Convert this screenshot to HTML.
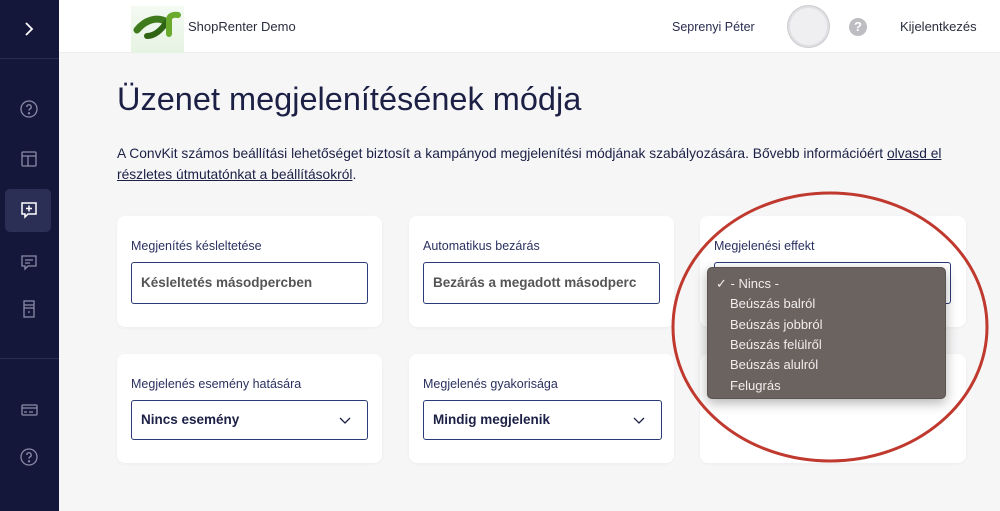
<!DOCTYPE html>
<html><head><meta charset="utf-8"><style>
*{margin:0;padding:0;box-sizing:border-box}
body{width:1000px;height:511px;overflow:hidden;background:#f6f6f7;font-family:"Liberation Sans",sans-serif;color:#1c2045;position:relative}
.side{position:absolute;left:0;top:0;width:59px;height:511px;background:#14163a}
.side .sep{position:absolute;left:0;width:59px;height:1px;background:#2a2d50}
.ic{position:absolute;left:19px}
.hdr{position:absolute;left:59px;top:0;width:941px;height:53px;background:#fff;border-bottom:1px solid #ececef}
.card{position:absolute;background:#fff;border-radius:8px;box-shadow:0 1px 3px rgba(0,0,0,.04)}
.lbl{position:absolute;left:14px;font-size:12.5px;color:#2b3160}
.inp{position:absolute;left:14px;width:237px;height:42px;border:1px solid #2b3a78;border-radius:3px;font-size:13.5px;font-weight:bold;padding-left:9px;line-height:40px}
.dd{position:absolute;left:707px;top:267px;width:239px;height:132px;background:#6b6360;border-radius:5px;border:1px solid #5a5350;box-shadow:0 4px 12px rgba(0,0,0,.3);color:#f2eeee;font-size:13px}
.dd div{position:absolute;left:22px}
</style></head><body>
<div class="side">
<svg class="ic" style="left:22px;top:20px" width="14" height="18" viewBox="0 0 14 18"><path d="M4 3l6 6-6 6" fill="none" stroke="#fff" stroke-width="1.8"/></svg>
<div class="sep" style="top:58px"></div>
<svg class="ic" style="top:99px" width="20" height="20" viewBox="0 0 20 20" fill="none" stroke="#8a8ca8" stroke-width="1.3"><circle cx="10" cy="10" r="8"/><path d="M7.8 8a2.2 2.2 0 1 1 3 2c-.7.4-.8.8-.8 1.6"/><circle cx="10" cy="14.3" r=".5" fill="#8a8ca8"/></svg>
<svg class="ic" style="top:149px" width="20" height="20" viewBox="0 0 20 20" fill="none" stroke="#8a8ca8" stroke-width="1.3"><rect x="3" y="3" width="14" height="14" rx="1"/><path d="M3 7h14M9 7v10"/></svg>
<div style="position:absolute;left:5px;top:189px;width:46px;height:43px;background:#2c2f55;border-radius:5px"></div>
<svg class="ic" style="top:200px" width="20" height="20" viewBox="0 0 20 20" fill="none" stroke="#fff" stroke-width="1.5"><path d="M3 3h14v11H9l-3 3v-3H3z"/><path d="M10 5.5v6M7 8.5h6"/></svg>
<svg class="ic" style="top:252px" width="20" height="20" viewBox="0 0 20 20" fill="none" stroke="#8a8ca8" stroke-width="1.3"><path d="M3 4h14v10H9l-3 3v-3H3z"/><path d="M6 8h8M6 11h5"/></svg>
<svg class="ic" style="top:299px" width="20" height="20" viewBox="0 0 20 20" fill="none" stroke="#8a8ca8" stroke-width="1.3"><rect x="5" y="2" width="10" height="16"/><path d="M5 6h10M5 9h10M9 13h2"/></svg>
<div class="sep" style="top:358px"></div>
<svg class="ic" style="top:400px" width="20" height="20" viewBox="0 0 20 20" fill="none" stroke="#8a8ca8" stroke-width="1.3"><rect x="3" y="5" width="15" height="10" rx="1"/><path d="M3 8h15M5 12h3M10 12h4"/></svg>
<svg class="ic" style="top:447px" width="20" height="20" viewBox="0 0 20 20" fill="none" stroke="#8a8ca8" stroke-width="1.3"><circle cx="10" cy="10" r="8"/><path d="M7.8 8a2.2 2.2 0 1 1 3 2c-.7.4-.8.8-.8 1.6"/><circle cx="10" cy="14.3" r=".5" fill="#8a8ca8"/></svg>
</div>
<div class="hdr">
<div style="position:absolute;left:72px;top:6px;width:53px;height:47px;background:linear-gradient(#f4faf2,#e6f3e3)"></div>
<svg style="position:absolute;left:74px;top:10px" width="50" height="30" viewBox="0 0 50 30"><path d="M4 20c8-10 20-14 30-8" fill="none" stroke="#3f7a1c" stroke-width="7" stroke-linecap="round"/><path d="M14 26c8 0 14-6 20-14" fill="none" stroke="#2f6415" stroke-width="6" stroke-linecap="round"/><path d="M36 24V10c0-4 4-6 9-5" fill="none" stroke="#6aab2e" stroke-width="6" stroke-linecap="round"/></svg>
<div style="position:absolute;left:129px;top:19px;font-size:13px;color:#2a2d3d">ShopRenter Demo</div>
<div style="position:absolute;left:613px;top:20px;font-size:12.5px;color:#2a2d50">Seprenyi Péter</div>
<div style="position:absolute;left:729px;top:6px;width:41px;height:41px;border-radius:50%;background:#efeff2;border:2px solid #e0e0e4;box-shadow:0 0 0 1px #ccc"></div>
<div style="position:absolute;left:790px;top:18px;width:18px;height:18px;border-radius:50%;background:#bdbdc2;color:#fff;font-size:13px;font-weight:bold;text-align:center;line-height:18px">?</div>
<div style="position:absolute;left:841px;top:19px;font-size:13px;color:#2a2d3d">Kijelentkezés</div>
</div>
<div style="position:absolute;left:117px;top:81px;font-size:32.5px;color:#1c2045">Üzenet megjelenítésének módja</div>
<div style="position:absolute;left:117px;top:143px;font-size:13.8px;line-height:21px;color:#1c2045;white-space:nowrap">A ConvKit számos beállítási lehetőséget biztosít a kampányod megjelenítési módjának szabályozására. Bővebb információért <u>olvasd el</u><br><u>részletes útmutatónkat a beállításokról</u>.</div>

<div class="card" style="left:117px;top:216px;width:265px;height:111px"><div class="lbl" style="top:23px">Megjenítés késleltetése</div><div class="inp" style="top:46px;color:#555">Késleltetés másodpercben</div></div>
<div class="card" style="left:409px;top:216px;width:265px;height:111px"><div class="lbl" style="top:23px">Automatikus bezárás</div><div class="inp" style="top:46px;color:#555;overflow:hidden;white-space:nowrap">Bezárás a megadott másodperc</div></div>
<div class="card" style="left:700px;top:216px;width:266px;height:111px"><div class="lbl" style="top:23px">Megjelenési effekt</div><div class="inp" style="top:46px;width:237px"></div></div>
<div class="card" style="left:117px;top:354px;width:265px;height:109px"><div class="lbl" style="top:23px">Megjelenés esemény hatására</div><div class="inp" style="top:46px;height:40px;line-height:38px">Nincs esemény<svg style="position:absolute;right:16px;top:16px" width="12" height="8" viewBox="0 0 12 8"><path d="M1 1l5 5 5-5" fill="none" stroke="#1c2045" stroke-width="1.3"/></svg></div></div>
<div class="card" style="left:409px;top:354px;width:265px;height:109px"><div class="lbl" style="top:23px">Megjelenés gyakorisága</div><div class="inp" style="top:46px;height:40px;line-height:38px;width:239px">Mindig megjelenik<svg style="position:absolute;right:16px;top:16px" width="12" height="8" viewBox="0 0 12 8"><path d="M1 1l5 5 5-5" fill="none" stroke="#1c2045" stroke-width="1.3"/></svg></div></div>
<div class="card" style="left:700px;top:354px;width:266px;height:109px"></div>

<div class="dd">
<div style="left:8px;top:8px">✓ - Nincs -</div>
<div style="top:28px">Beúszás balról</div>
<div style="top:49px">Beúszás jobbról</div>
<div style="top:69px">Beúszás felülről</div>
<div style="top:89px">Beúszás alulról</div>
<div style="top:110px">Felugrás</div>
</div>
<svg style="position:absolute;left:0;top:0" width="1000" height="511"><ellipse cx="830" cy="327" rx="157" ry="134" fill="none" stroke="#c0392f" stroke-width="3"/></svg>
</body></html>
